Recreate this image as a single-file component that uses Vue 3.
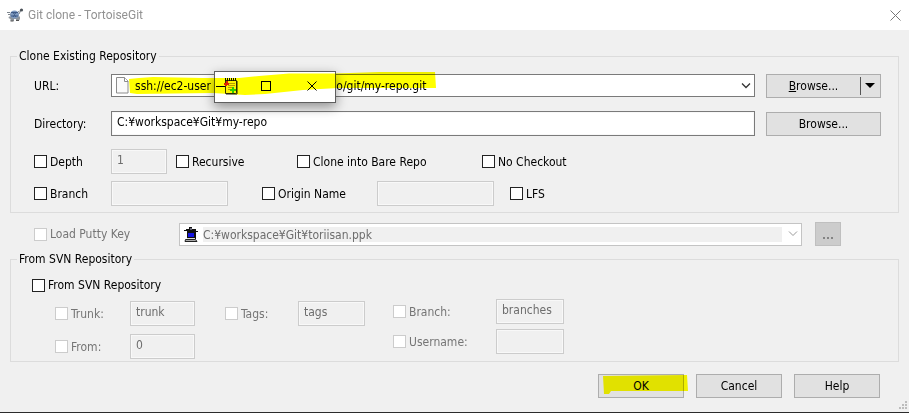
<script setup>
import { ref } from 'vue'

const url = ref('ssh://ec2-user @e2.example.com/repo/git/my-repo.git')
const directory = ref('C:¥workspace¥Git¥my-repo')
const depth = ref('1')
const trunk = ref('trunk')
const tags = ref('tags')
const branches = ref('branches')
const from = ref('0')
</script>

<template>
  <main class="dialog">
    <header class="titlebar">
      <svg class="app-icon" width="17" height="14" viewBox="0 0 17 14" aria-hidden="true">
        <path d="M2 8.500h11v2.500l-1 1.500H9V11H7v2H3.500v-2L1.500 10z" fill="#8d949b" />
        <ellipse cx="7.500" cy="6.500" rx="4.500" ry="4" fill="#7d99bf" />
        <path d="M4 4.500h7M3.500 8h8M6 4.500l1.500 2L9 4.500M6 9l1.500-2L9 9" stroke="#3e5a86" fill="none" />
        <path d="M0 4.500h3M1 6.500h2.500M12 6l2-4M11 4l1.500-1" stroke="#7e868e" fill="none" />
        <circle cx="14.500" cy="2" r="1.600" fill="#4b5158" />
        <path d="M3.500 13h3M9 12.500h3" stroke="#555" fill="none" />
      </svg>
      <h1>Git clone - TortoiseGit</h1>
      <button class="close" aria-label="Close">
        <svg width="11" height="11" viewBox="0 0 11 11"><path d="M.5.5l10 10M10.500.5l-10 10" stroke="#777" fill="none" /></svg>
      </button>
    </header>

    <form class="body" @submit.prevent>
      <fieldset class="group">
        <legend>Clone Existing Repository</legend>
        <div class="field-row">
          <label for="url">URL:</label>
          <div class="combo">
            <svg width="13" height="17" viewBox="0 0 13 17" aria-hidden="true">
              <path d="M.5.5h8l3.500 3.500v12H.5z" fill="#fafafa" stroke="#8c8c8c" />
              <path d="M8.500.5v4h3.500" fill="#fff" stroke="#8c8c8c" />
            </svg>
            <input id="url" v-model="url" type="text" />
            <button type="button" class="arrow" aria-label="Show recent URLs">
              <svg width="10" height="6" viewBox="0 0 10 6"><path d="M1 .5l4 4 4-4" stroke="#333" stroke-width="1.300" fill="none" /></svg>
            </button>

            <div class="mini-window">
              <svg width="120" height="30" viewBox="0 0 120 30" aria-hidden="true">
                <path d="M1 14.500h9" stroke="#000" />
                <path d="M10.500 8.500h11v12l-1 1h-10z" fill="#fff27a" stroke="#333" />
                <path d="M22 9v13H11" fill="none" stroke="#222" />
                <path d="M10 7.500h12" stroke="#111" stroke-width="3" stroke-dasharray="1 1" />
                <path d="M13 11.500h7M13 13.500h7M13 15.500h6M13 17.500h4" stroke="#b6a05a" />
                <path d="M9 11h2V9h2v2h1v2h-2v1h-2v-1H9z" fill="#e02020" />
                <path d="M15 17h2v-2h2v2h2v2h-2v2h-2v-2h-2z" fill="#2fd02f" />
                <rect x="46.500" y="9.500" width="9" height="9" fill="none" stroke="#000" />
                <path d="M92.500 9.500l9 9M101.500 9.500l-9 9" stroke="#000" fill="none" />
              </svg>
            </div>
            <svg class="marker" width="308" height="24" viewBox="0 0 308 24" aria-hidden="true">
              <path d="M1 7l10-1 14-1 50 1 36 0 20-2 30-2.500 46 0 44-1.500h56l1 16H210l-35 2-38 4-20 1-32-2-76 1-7-1z" fill="#ff0" />
            </svg>
          </div>
          <div class="split">
            <button type="button" class="btn"><u>B</u>rowse...</button>
            <button type="button" class="drop" aria-label="More browse options">
              <svg width="10" height="5" viewBox="0 0 10 5"><path d="M0 0h10L5 5z" /></svg>
            </button>
          </div>
        </div>
        <div class="field-row">
          <label for="dir">Directory:</label>
          <input id="dir" v-model="directory" class="text active" type="text" />
          <button type="button" class="btn">Browse...</button>
        </div>
        <div class="options first">
          <label class="check"><input type="checkbox" />Depth</label>
          <input v-model="depth" class="text" type="text" aria-label="Depth value" disabled />
          <label class="check"><input type="checkbox" />Recursive</label>
          <label class="check"><input type="checkbox" />Clone into Bare Repo</label>
          <label class="check"><input type="checkbox" />No Checkout</label>
        </div>
        <div class="options second">
          <label class="check"><input type="checkbox" />Branch</label>
          <input class="text" type="text" aria-label="Branch name" disabled />
          <label class="check"><input type="checkbox" />Origin Name</label>
          <input class="text" type="text" aria-label="Origin name value" disabled />
          <label class="check"><input type="checkbox" />LFS</label>
        </div>
      </fieldset>

      <div class="putty">
        <label class="check off"><input type="checkbox" disabled />Load Putty Key</label>
        <div class="combo disabled">
          <svg width="14" height="15" viewBox="0 0 14 15" aria-hidden="true">
            <path d="M3 4h9v8H3z" fill="#111" />
            <path d="M4 6h6v4H4z" fill="#1414e0" />
            <path d="M0 3h2V2h3V0h3v2h4v2h2v1H3V4H0z" fill="#111" />
            <path d="M6 1h2v2H6z" fill="#667" />
            <path d="M3 11h8v1H3z" fill="#ddd" />
            <path d="M1.500 12.500h10l1.500 2h-12z" fill="#aaa" stroke="#222" />
          </svg>
          <select aria-label="Putty key file" disabled>
            <option>C:¥workspace¥Git¥toriisan.ppk</option>
          </select>
          <svg class="chevron" width="10" height="6" viewBox="0 0 10 6" aria-hidden="true"><path d="M1 .5l4 4 4-4" stroke="#999" fill="none" /></svg>
        </div>
        <button type="button" class="btn" disabled aria-label="Browse for key">
          <svg width="12" height="12" viewBox="0 0 12 12"><path d="M1 9h2v2H1zM5 9h2v2H5zM9 9h2v2H9z" fill="#838383" /></svg>
        </button>
      </div>

      <fieldset class="group svn">
        <legend>From SVN Repository</legend>
        <label class="check"><input type="checkbox" />From SVN Repository</label>
        <div class="svn-options">
          <div class="column left">
            <label class="check off"><input type="checkbox" disabled />Trunk:</label>
            <input v-model="trunk" class="text" type="text" aria-label="Trunk path" disabled />
            <label class="check off"><input type="checkbox" disabled />From:</label>
            <input v-model="from" class="text" type="text" aria-label="From revision" disabled />
          </div>
          <div class="column middle">
            <label class="check off"><input type="checkbox" disabled />Tags:</label>
            <input v-model="tags" class="text" type="text" aria-label="Tags path" disabled />
          </div>
          <div class="column right">
            <label class="check off"><input type="checkbox" disabled />Branch:</label>
            <input v-model="branches" class="text" type="text" aria-label="Branches path" disabled />
            <label class="check off"><input type="checkbox" disabled />Username:</label>
            <input class="text" type="text" aria-label="Username value" disabled />
          </div>
        </div>
      </fieldset>

      <footer class="actions">
        <div class="ok">
          <button type="submit" class="btn">OK</button>
          <svg class="marker" width="86" height="20" viewBox="0 0 86 20" aria-hidden="true">
            <path d="M0 1l84-1 1 16H8l-2 3H1z" fill="#ff0" />
          </svg>
        </div>
        <button type="button" class="btn">Cancel</button>
        <button type="button" class="btn">Help</button>
      </footer>
    </form>
    <svg class="grip" width="9" height="9" viewBox="0 0 9 9" aria-hidden="true">
      <path d="M6 0h2v2H6zM3 3h2v2H3zM6 3h2v2H6zM0 6h2v2H0zM3 6h2v2H3zM6 6h2v2H6z" fill="#bcbcbc" />
    </svg>
  </main>
</template>

<style>
body {
  margin: 0;
  background: #f0f0f0;
}
</style>

<style scoped>
* {
  box-sizing: border-box;
}
.dialog {
  position: relative;
  min-height: 100vh;
  background: #f0f0f0;
  border-bottom: 1px solid #2b2b2b;
  font: 12px/16px "DejaVu Sans Condensed", "Noto Sans", sans-serif;
  color: #000;
}
button,
input,
select {
  font: inherit;
  color: inherit;
  margin: 0;
}
svg {
  display: block;
  flex: none;
}
.titlebar {
  display: flex;
  align-items: center;
  height: 30px;
  padding: 0 8px 0 7px;
  background: #fff;
}
h1 {
  flex: 1;
  margin: 0 0 0 4px;
  font: 12px/16px Roboto, "Noto Sans", sans-serif;
  color: #929292;
}
.close,
.arrow,
.drop {
  border: 0;
  padding: 0;
  background: none;
}
.body {
  padding: 18px 10px 0;
}
.group {
  margin: 0;
  min-width: 0;
  border: 1px solid #dcdcdc;
  padding: 9px 17px 6px 23px;
}
legend {
  margin-left: -17px;
  padding: 0 2px;
}
.field-row {
  display: grid;
  grid-template-columns: 66px 1fr 115px;
  column-gap: 11px;
  align-items: center;
  height: 25px;
  margin-bottom: 13px;
}
.combo {
  position: relative;
  display: flex;
  align-items: center;
  height: 23px;
  padding-left: 4px;
  background: #fff;
  border: 1px solid #7a7a7a;
}
.combo input {
  flex: 1;
  min-width: 0;
  padding: 0 0 0 6px;
  border: 0;
  outline: 0;
  background: none;
}
.arrow {
  padding: 0 3px;
}
.text {
  min-width: 0;
  width: 100%;
  height: 25px;
  padding: 0 5px 4px;
  border: 1px solid #cccccc;
  background: #f0f0f0;
  box-shadow: inset 0 0 0 1px #f8f8f8;
  color: #6d6d6d;
}
.text.active {
  border-color: #7a7a7a;
  background: #fff;
  color: #000;
}
.btn {
  height: 24px;
  padding: 0;
  border: 1px solid #adadad;
  background: #e1e1e1;
  text-align: center;
}
.btn:disabled {
  border-color: #bfbfbf;
  background: #cccccc;
  padding-left: 6px;
}
.split {
  display: flex;
  border: 1px solid #adadad;
  background: #e1e1e1;
}
.split .btn {
  flex: 1;
  height: 22px;
  border: 0;
}
.drop {
  width: 20px;
  margin: 2px 0;
  padding-left: 4px;
  border-left: 1px solid #555;
}
.mini-window {
  position: absolute;
  left: 102px;
  top: -4px;
  border: 1px solid #5f5f5f;
  background: #fff;
  box-shadow: 0 4px 12px rgba(0, 0, 0, 0.4);
}
.marker {
  position: absolute;
  mix-blend-mode: multiply;
  pointer-events: none;
}
.combo .marker {
  left: 16px;
  top: -3px;
}
.options {
  display: grid;
  align-items: center;
}
.first {
  grid-template-columns: 77px 56px 121px 185px 1fr;
}
.first > :nth-child(n + 3) {
  margin-left: 9px;
}
.second {
  grid-template-columns: 77px 117px 149px 117px 1fr;
  margin-top: 7px;
}
.second > :nth-child(3) {
  margin-left: 34px;
}
.second > :nth-child(5) {
  margin-left: 16px;
}
.check {
  display: flex;
  align-items: center;
  gap: 3px;
  white-space: nowrap;
}
.check input {
  appearance: none;
  flex: none;
  width: 13px;
  height: 13px;
  border: 1px solid #222;
  background: #fff;
}
.off {
  color: #757575;
}
.off input {
  border-color: #cccccc;
}
.putty {
  display: grid;
  grid-template-columns: 145px 1fr 26px;
  align-items: center;
  margin: 9px 58px 5px 24px;
}
.disabled {
  margin-right: 13px;
  border-color: #c4c4c4;
}
.disabled select {
  appearance: none;
  flex: 1;
  min-width: 0;
  height: 15px;
  padding: 0;
  border: 0;
  background: #f0f0f0;
  color: #6d6d6d;
  opacity: 1;
  margin-left: 5px;
}
.chevron {
  margin: 0 3px 0 6px;
}
.svn {
  padding: 10px 17px 2px 21px;
}
.svn legend {
  margin-left: -15px;
}
.svn-options {
  display: flex;
  margin: 6px 0 0 23px;
}
.column {
  display: grid;
  align-content: start;
  align-items: center;
}
.left {
  grid-template-columns: 75px 65px;
  row-gap: 8px;
  padding-top: 2px;
}
.middle {
  grid-template-columns: 73px 67px;
  margin-left: 30px;
  padding-top: 2px;
}
.right {
  grid-template-columns: 103px 68px;
  row-gap: 5px;
  margin-left: 28px;
}
.actions {
  display: flex;
  justify-content: flex-end;
  gap: 12px;
  padding: 12px 19px 12px 0;
}
.actions .btn {
  width: 86px;
}
.ok {
  position: relative;
}
.ok .marker {
  left: 5px;
  top: 1px;
}
.grip {
  position: absolute;
  right: 1px;
  bottom: 2px;
}
</style>
